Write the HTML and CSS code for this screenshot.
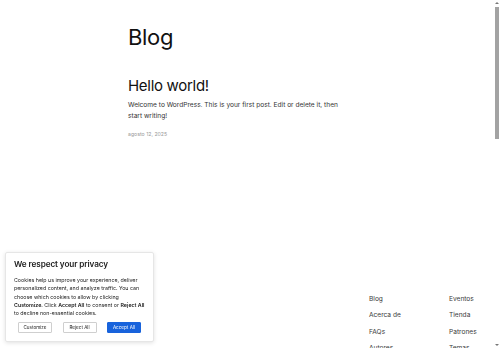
FILE: index.html
```html
<!DOCTYPE html>
<html lang="es">
<head>
    <meta charset="UTF-8">
    <meta name="viewport" content="width=device-width, initial-scale=1.0">
    <title>Blog</title>
    <link rel="stylesheet" href="styles.css">
</head>
<body>
    <main class="main">
        <h1 class="page-title">Blog</h1>
        <article class="post">
            <h2 class="post-title">Hello world!</h2>
            <p class="post-excerpt">Welcome to WordPress. This is your first post. Edit or delete it, then start writing!</p>
            <div class="post-date">agosto 12, 2025</div>
        </article>
    </main>
    <footer class="footer">
        <nav class="footer-nav">
            <ul class="footer-col">
                <li><a href="#">Blog</a></li>
                <li><a href="#">Acerca de</a></li>
                <li><a href="#">FAQs</a></li>
                <li><a href="#">Autores</a></li>
            </ul>
            <ul class="footer-col">
                <li><a href="#">Eventos</a></li>
                <li><a href="#">Tienda</a></li>
                <li><a href="#">Patrones</a></li>
                <li><a href="#">Temas</a></li>
            </ul>
        </nav>
    </footer>
    <div class="cookie-banner">
        <div class="cookie-title">We respect your privacy</div>
        <p class="cookie-text">Cookies help us improve your experience, deliver personalized content, and analyze traffic. You can choose which cookies to allow by clicking <b>Customize</b>. Click <b>Accept All</b> to consent or <b>Reject All</b> to decline non-essential cookies.</p>
        <div class="cookie-buttons">
            <button class="btn">Customize</button>
            <button class="btn">Reject All</button>
            <button class="btn btn-primary">Accept All</button>
        </div>
    </div>
    <div class="scrollbar">
        <span class="scroll-arrow up"></span>
        <span class="scroll-thumb"></span>
        <span class="scroll-arrow down"></span>
    </div>
</body>
</html>
```

FILE: styles.css
```css
* {
    margin: 0;
    padding: 0;
    box-sizing: border-box;
}
html {
    scrollbar-width: none;
}
body {
    font-family: 'Inter', 'Noto Sans', sans-serif;
    color: #111;
    background: #fff;
    min-height: 865px;
}
a {
    color: inherit;
    text-decoration: none;
}
ul {
    list-style: none;
}
.main {
    width: 230px;
    margin-left: 128px;
    padding-top: 24px;
}
.page-title {
    font-size: 22px;
    font-weight: 400;
    line-height: 26px;
    letter-spacing: -0.3px;
}
.post {
    margin-top: 27px;
}
.post-title {
    font-size: 15px;
    font-weight: 400;
    line-height: 18px;
    letter-spacing: -0.3px;
}
.post-excerpt {
    width: 214px;
    margin-top: 5px;
    font-size: 6.6px;
    line-height: 11px;
    color: #333;
}
.post-date {
    margin-top: 9px;
    font-size: 5.2px;
    color: #999;
}
.footer {
    margin-top: 158px;
    padding-left: 369px;
}
.footer-nav {
    display: flex;
    gap: 40px;
}
.footer-col {
    width: 40px;
    display: flex;
    flex-direction: column;
    gap: 7.8px;
    font-size: 6.6px;
    line-height: 8.5px;
    color: #3a3a3a;
}
.cookie-banner {
    position: fixed;
    left: 5px;
    top: 252px;
    width: 149px;
    padding: 6px 8px 8px;
    background: #fff;
    border: 1px solid #e6e6e6;
    border-radius: 2px;
    box-shadow: 0 1px 4px rgba(0, 0, 0, 0.12);
}
.cookie-title {
    font-size: 8.2px;
    font-weight: 600;
    line-height: 11px;
    letter-spacing: -0.1px;
    color: #212121;
}
.cookie-text {
    margin-top: 6px;
    font-size: 5.3px;
    line-height: 8.3px;
    color: #212121;
}
.cookie-text b {
    font-weight: 600;
}
.cookie-buttons {
    display: flex;
    justify-content: space-between;
    margin-top: 5px;
    padding: 0 4px;
}
.btn {
    width: 34px;
    height: 11px;
    font-family: inherit;
    font-size: 4.6px;
    color: #212121;
    background: #fff;
    border: 1px solid #cfcfcf;
    border-radius: 1px;
}
.btn-primary {
    background: #1863dc;
    border-color: #1863dc;
    color: #fff;
}
.scrollbar {
    position: fixed;
    top: 0;
    right: 0;
    width: 6px;
    height: 348px;
    display: flex;
    flex-direction: column;
    align-items: center;
}
.scroll-arrow {
    width: 0;
    height: 0;
    border-left: 2px solid transparent;
    border-right: 2px solid transparent;
}
.scroll-arrow.up {
    margin-top: 2px;
    border-bottom: 2px solid #777;
}
.scroll-arrow.down {
    margin-top: auto;
    margin-bottom: 2px;
    border-top: 2px solid #777;
}
.scroll-thumb {
    width: 4px;
    height: 132px;
    margin-top: 3px;
    background: #a3a3a3;
}
```
